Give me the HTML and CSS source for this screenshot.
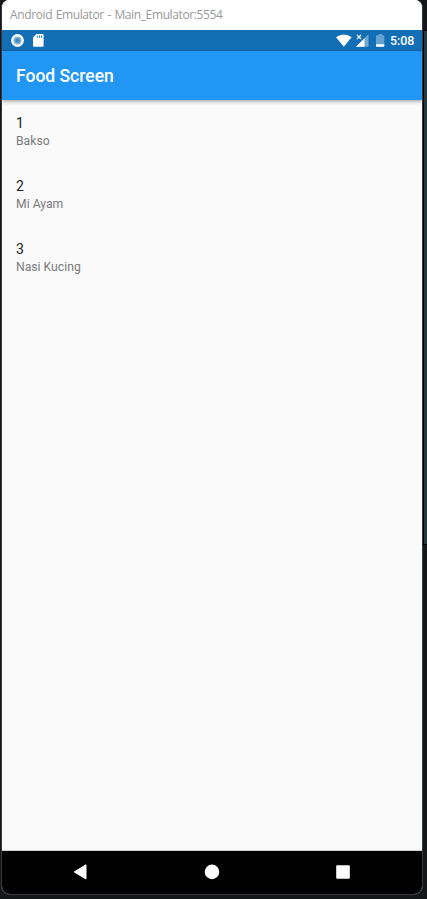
FILE: index.html
```html
<!DOCTYPE html>
<html lang="en">
<head>
<meta charset="utf-8">
<title>Android Emulator</title>
<link rel="stylesheet" href="styles.css">
</head>
<body>
<div class="backdrop"></div>
<main class="window">
  <div class="titlebar"><span class="window-title">Android Emulator - Main_Emulator:5554</span></div>
  <div class="statusbar">
    <svg class="icon-record" width="14" height="14" viewBox="0 0 14 14"><circle cx="6.5" cy="6.5" r="6.4" fill="#fff"/><circle cx="6.5" cy="6.5" r="4.1" fill="#7eb3dc"/><circle cx="6.5" cy="6.5" r="2.2" fill="#4389bd"/></svg>
    <svg class="icon-card" width="11" height="13" viewBox="0 0 11 13"><path d="M3.6 0H9.5Q10.6 0 10.6 1.1V11.7Q10.6 12.8 9.5 12.8H1.1Q0 12.8 0 11.7V3.6Z" fill="#fff"/><path d="M4 1.4h1.2v2.3H4zM6 1.4h1.2v2.3H6zM8 1.4h1.2v2.3H8z" fill="#3d86be"/></svg>
    <div class="status-right">
      <svg class="icon-wifi" width="16" height="13" viewBox="0 0 16 13"><path d="M0 3.2Q3.4.4 7.8.4T15.6 3.2L7.8 12.7Z" fill="#fff"/></svg>
      <svg class="icon-signal" width="13" height="13" viewBox="0 0 13 13"><path d="M12.5.2V12.7H0Z" fill="#71a9d3"/><path d="M8.5 4.2V12.7H0Z" fill="#fff"/><path d="M0 0H6V5.7H0Z" fill="#136fb5"/><path d="M1 1L5 5M5 1L1 5" stroke="#fff" stroke-width="1.1"/></svg>
      <svg class="icon-battery" width="9" height="13" viewBox="0 0 9 13"><path d="M2.5 0h3.6v1.2h1.5q.7 0 .7.7v10.2q0 .7-.7.7H.7Q0 12.8 0 12.1V1.9q0-.7.7-.7h1.8Z" fill="#67a3d0"/><path d="M0 10.3h8.3v1.8q0 .7-.7.7H.7Q0 12.8 0 12.1Z" fill="#fff"/></svg>
      <span class="clock">5:08</span>
    </div>
  </div>
  <header class="appbar"><h1 class="app-title">Food Screen</h1></header>
  <section class="content">
    <div class="item"><div class="number">1</div><div class="name">Bakso</div></div>
    <div class="item"><div class="number">2</div><div class="name">Mi Ayam</div></div>
    <div class="item"><div class="number">3</div><div class="name">Nasi Kucing</div></div>
  </section>
  <nav class="navbar">
    <svg width="14" height="16" viewBox="0 0 14 16"><path d="M13 .8V15L1.2 7.9Z" fill="#fff" stroke="#fff" stroke-linejoin="round"/></svg>
    <svg width="16" height="16" viewBox="0 0 16 16"><circle cx="8" cy="7.9" r="7.3" fill="#fff"/></svg>
    <svg width="14" height="14" viewBox="0 0 14 14"><rect x=".2" y=".2" width="13.6" height="13.6" rx="1" fill="#fff"/></svg>
  </nav>
</main>
</body>
</html>
```

FILE: styles.css
```css
* { box-sizing: border-box; }
body {
  margin: 0;
  height: 899px;
  overflow: hidden;
  background: #151619;
  font-family: Roboto, sans-serif;
}
svg { display: block; }
.backdrop {
  position: absolute;
  top: 30px;
  right: 0;
  width: 4px;
  height: 515px;
  background: #263840;
  border: 1px solid #000;
  border-right: 0;
}
.window {
  position: relative;
  width: 422px;
  height: 895px;
  margin-left: 1px;
  display: flex;
  flex-direction: column;
  background: #fafafa;
  border: 1px solid #35373a;
  border-top: 0;
  border-radius: 8px 8px 9px 9px;
  overflow: hidden;
}
.titlebar {
  height: 30px;
  padding: 7px 8px 0;
  background: #fff;
}
.window-title {
  display: block;
  font: 12px/16px "Open Sans", sans-serif;
  letter-spacing: -0.38px;
  word-spacing: 0.8px;
  color: #999;
  white-space: nowrap;
}
.statusbar {
  height: 21px;
  display: flex;
  align-items: center;
  padding: 0 6px 0 9px;
  background: #136fb5;
}
.icon-card { margin-left: 8px; }
.status-right {
  display: flex;
  align-items: center;
  margin-left: auto;
}
.icon-signal { margin-left: 4px; }
.icon-battery { margin-left: 7px; }
.clock {
  margin-left: 5px;
  width: 26px;
  font-size: 12.4px;
  line-height: 20px;
  font-weight: 500;
  color: #fff;
}
.appbar {
  position: relative;
  height: 49px;
  display: flex;
  align-items: center;
  padding: 1px 14px 0;
  background: #2196f3;
  box-shadow: 0 1px 4px rgba(0, 0, 0, 0.42);
}
.app-title {
  margin: 0;
  font-size: 17.5px;
  line-height: 24px;
  font-weight: 500;
  color: #fff;
}
.content {
  flex: 1;
  padding: 14px;
  border-bottom: 1px solid #c8d0cf;
}
.item { height: 63px; }
.number {
  font-size: 14px;
  line-height: 19px;
  color: #222;
}
.name {
  font-size: 12.2px;
  line-height: 17px;
  color: #7a7a7a;
}
.navbar {
  height: 43px;
  display: flex;
  align-items: center;
  justify-content: space-between;
  padding: 0 72px 1px 71px;
  background: #000;
}
```
